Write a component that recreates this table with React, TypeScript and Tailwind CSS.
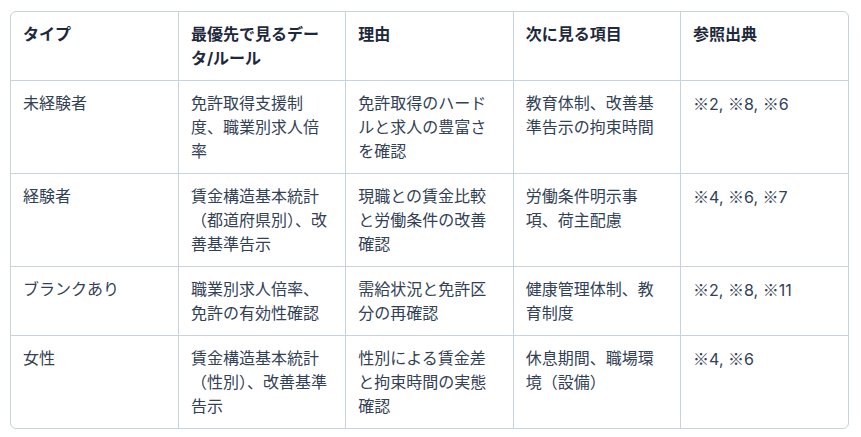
const rows = [
  ["未経験者", "免許取得支援制度、職業別求人倍率", "免許取得のハードルと求人の豊富さを確認", "教育体制、改善基準告示の拘束時間", "※2, ※8, ※6"],
  ["経験者", "賃金構造基本統計（都道府県別）、改善基準告示", "現職との賃金比較と労働条件の改善確認", "労働条件明示事項、荷主配慮", "※4, ※6, ※7"],
  ["ブランクあり", "職業別求人倍率、免許の有効性確認", "需給状況と免許区分の再確認", "健康管理体制、教育制度", "※2, ※8, ※11"],
  ["女性", "賃金構造基本統計（性別）、改善基準告示", "性別による賃金差と拘束時間の実態確認", "休息期間、職場環境（設備）", "※4, ※6"],
]

const headers = ["タイプ", "最優先で見るデータ/ルール", "理由", "次に見る項目", "参照出典"]

// ※ comes out tiny in Inter, so give it the CJK face
function Refs({ text }: { text: string }) {
  return (
    <>
      {text.split(/(※)/).map((part, i) =>
        part === "※" ? (
          <span key={i} style={{ fontFamily: '"Noto Sans CJK JP", sans-serif' }}>
            ※
          </span>
        ) : (
          <span key={i}>{part}</span>
        )
      )}
    </>
  )
}

export default function App() {
  return (
    <div
      className="bg-white pt-[11px] pl-[10px]"
      style={{ fontFamily: 'Inter, "Noto Sans CJK JP", sans-serif' }}
    >
      <div className="w-[839px] border border-[#c8d3de] rounded-md overflow-hidden">
        <table className="w-full table-fixed border-collapse text-[16px] leading-6">
          <thead>
            <tr>
              {headers.map((h, i) => (
                <th
                  key={h}
                  className={
                    "px-3 pt-[10px] pb-[10px] text-left align-top font-bold text-[#1e293b] border-b border-[#c8d3de] " +
                    (i < headers.length - 1 ? "border-r" : "")
                  }
                >
                  {h}
                </th>
              ))}
            </tr>
          </thead>
          <tbody>
            {rows.map((r, ri) => (
              <tr key={ri}>
                {r.map((c, ci) => (
                  <td
                    key={ci}
                    className={
                      "px-3 pt-[10px] pb-[10px] align-top text-[#334155] border-[#c8d3de] " +
                      (ci < r.length - 1 ? "border-r " : "") +
                      (ri < rows.length - 1 ? "border-b" : "")
                    }
                  >
                    {ci === r.length - 1 ? <Refs text={c} /> : c}
                  </td>
                ))}
              </tr>
            ))}
          </tbody>
        </table>
      </div>
    </div>
  )
}
